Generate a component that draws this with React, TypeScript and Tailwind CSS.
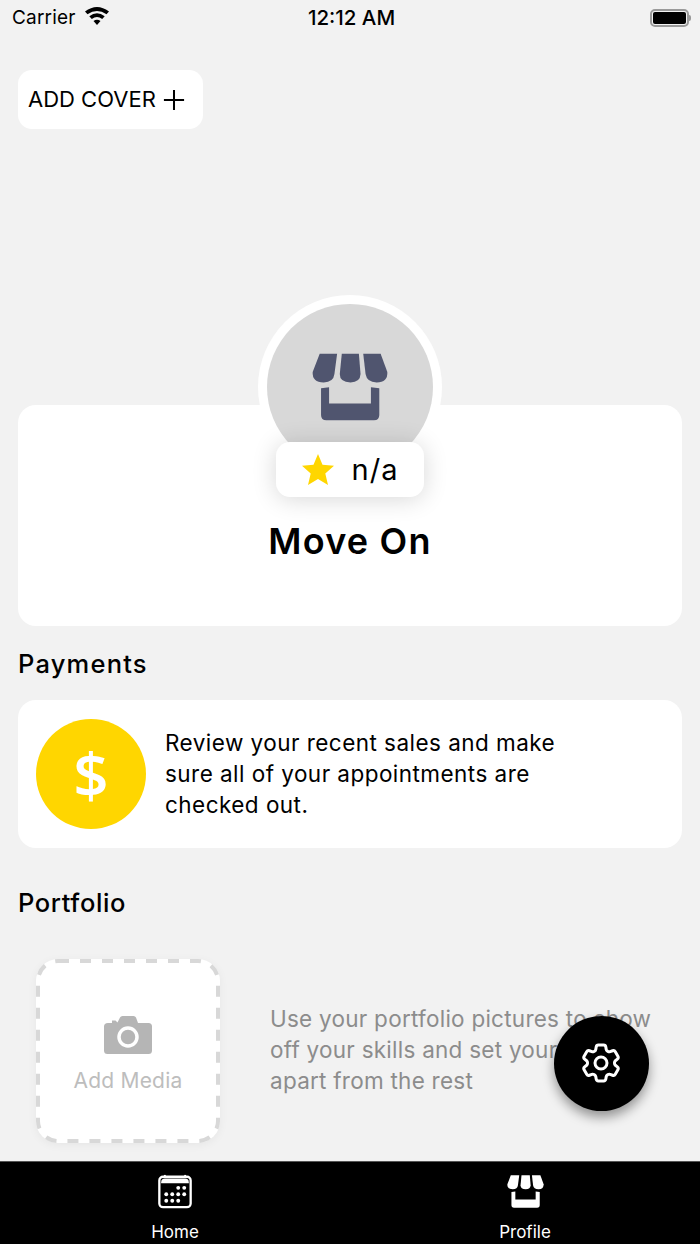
import React from "react";
import { HiOutlineCog6Tooth } from "react-icons/hi2";

const font = "font-['Inter','Liberation_Sans',sans-serif]";

function StoreIcon({ className, fill }: { className: string; fill: string }) {
    return (
        <svg viewBox="214 205 227 203" className={className} fill={fill}>
            <path d="M237 207H289L281 268Q278 293 249 293Q214 293 216 262Z" />
            <path d="M303 207H354L359 268Q358 293 329 293Q297 293 297 268Z" />
            <path d="M367 207H419L439 262Q441 293 407 293Q378 293 374 268Z" />
            <path d="M241 310L265 307V356H390V307L415 310V390Q415 406 399 406H257Q241 406 241 390Z" />
        </svg>
    );
}

function CalendarIcon() {
    const dots = [
        [22.5, 15], [29, 15],
        [9.5, 22], [16, 22], [22.5, 22], [29, 22],
        [9.5, 29], [16, 29], [22.5, 29],
    ];
    return (
        <svg viewBox="0 0 38 38" className="w-[38px] h-[38px]" fill="white">
            <rect x="2" y="3" width="34" height="33" rx="4" fill="none" stroke="white" strokeWidth="2.500" />
            <path d="M4 9Q4 5 8 5H30Q34 5 34 9V10H4Z" />
            <rect x="7" y="1" width="2" height="3" />
            <rect x="29" y="1" width="2" height="3" />
            {dots.map(([x, y], i) => <circle key={i} cx={x} cy={y} r="2.100" />)}
        </svg>
    );
}

function CameraIcon() {
    return (
        <svg viewBox="0 0 48 38" className="w-12 h-[38px]">
            <path
                fill="#b5b5b5"
                d="M4 7H8V4.500H11.500L13.500 6.500L16 1.500Q16.700 0 18.500 0H29.500Q31.300 0 32 1.500L34 7H44.500Q48 7 48 10.500V34.500Q48 38 44.500 38H3.500Q0 38 0 34.500V10.500Q0 7 4 7Z"
            />
            <circle cx="24" cy="21" r="9" fill="none" stroke="white" strokeWidth="3.500" />
        </svg>
    );
}

function StatusBar() {
    return (
        <div className="h-[36px] flex items-center justify-between pl-3 pr-[9px] text-black">
            <div className="flex items-center gap-[8px] w-[120px] text-[19px] tracking-[0.2px]">
                <span>Carrier</span>
                <svg viewBox="0 0 26 20" className="w-[26px] h-5 -mt-1" fill="black">
                    <path d="M13 19L9.500 15Q13 12.300 16.500 15Z" />
                    <path d="M7.800 13L5.300 10.300Q13 4.300 20.700 10.300L18.200 13Q13 9.200 7.800 13Z" />
                    <path d="M3.500 8.300L1 5.500Q13 -3.500 25 5.500L22.500 8.300Q13 1.500 3.500 8.300Z" />
                </svg>
            </div>
            <span className="text-[20.5px] font-medium">12:12 AM</span>
            <div className="w-[120px] flex justify-end items-center">
                <div className="w-[39px] h-[18px] rounded-[5px] border-2 border-[#9a9a9a] p-[1px]">
                    <div className="w-full h-full rounded-[2px] bg-black" />
                </div>
                <div className="w-[2px] h-[6px] bg-[#9a9a9a] rounded-r-sm" />
            </div>
        </div>
    );
}

export default function App() {
    return (
        <div className={`${font} relative w-[700px] h-[1244px] overflow-hidden bg-[#f2f2f2] flex flex-col`}>
            <StatusBar />

            <main className="flex-1 px-[18px]">
                <button className="mt-[34px] w-[185px] h-[59px] bg-white rounded-[14px] flex items-center pl-[10px] gap-[7px] text-[22px] text-black">
                    ADD COVER
                    <svg viewBox="0 0 24 24" className="w-[22px] h-[22px]" stroke="black" strokeWidth="2.200">
                        <path d="M12 1V23M1 12H23" />
                    </svg>
                </button>

                {/* Avatar + rating overlap the card */}
                <div className="mt-[166px] flex flex-col items-center relative z-10 h-[202px]">
                    <div className="w-[184px] h-[184px] rounded-full bg-white p-[9px] shrink-0">
                        <div className="w-full h-full rounded-full bg-[#d8d8d8] flex justify-center pt-[49px]">
                            <StoreIcon className="w-[76px] h-[68px]" fill="#50556f" />
                        </div>
                    </div>
                    <div className="-mt-[37px] w-[148px] h-[55px] shrink-0 bg-white rounded-[14px] flex items-center justify-center gap-[18px] shadow-[0_2px_24px_rgba(0,0,0,0.16)]">
                        <svg viewBox="0 0 32 31" className="w-8 h-[31px]" fill="#ffd600">
                            <path d="M16 0L20.500 10.800L32 11.800L23.300 19.500L26 31L16 24.900L6 31L8.700 19.500L0 11.800L11.500 10.800Z" />
                        </svg>
                        <span className="text-[29px] text-black tracking-[1px]">n/a</span>
                    </div>
                </div>

                <div className="-mt-[92px] h-[221px] bg-white rounded-[18px] flex justify-center pt-[111px]">
                    <h1 className="text-[36px] leading-[50px] font-semibold text-black tracking-[1.2px]">Move On</h1>
                </div>

                <h2 className="mt-[20px] text-[25.5px] leading-[36px] font-medium text-black tracking-[1.2px]">Payments</h2>

                <div className="mt-[18px] h-[148px] bg-white rounded-[18px] flex items-center pl-[18px] gap-[19px]">
                    <div className="w-[110px] h-[110px] rounded-full bg-[#ffd600] flex items-center justify-center shrink-0">
                        <span className="text-[62px] leading-none font-semibold text-white font-['Open_Sans',sans-serif]">$</span>
                    </div>
                    <p className="w-[410px] -mt-[2px] text-[22.5px] leading-[31px] tracking-[0.46px] text-black">
                        Review your recent sales and make sure all of your appointments are checked out.
                    </p>
                </div>

                <h2 className="mt-[37px] text-[25.5px] leading-[36px] font-medium text-black tracking-[0.6px]">Portfolio</h2>

                <div className="mt-[38px] flex items-center pl-[18px] gap-[50px]">
                    <div className="relative w-[184px] h-[184px] bg-white rounded-[22px] flex flex-col items-center shrink-0 pt-[57px] shadow-[0_2px_10px_rgba(0,0,0,0.05)]">
                        <svg className="absolute inset-0 w-full h-full" viewBox="0 0 184 184" fill="none">
                            <rect x="2" y="2" width="180" height="180" rx="20" stroke="#d8d8d8" strokeWidth="4" strokeDasharray="11 11" />
                        </svg>
                        <CameraIcon />
                        <span className="mt-[12px] text-[21px] leading-[30px] tracking-[0.2px] text-[#bdbdbd]">Add Media</span>
                    </div>
                    <p className="w-[385px] -mt-[4px] text-[22.5px] leading-[31px] tracking-[0.25px] text-[#8c8c8c] shrink-0">
                        Use your portfolio pictures to show off your skills and set yourself apart from the rest
                    </p>
                </div>
            </main>

            {/* Floating settings button */}
            <button className="absolute left-[554px] top-[1016px] w-[95px] h-[95px] rounded-full bg-black flex items-center justify-center shadow-[0_6px_12px_rgba(0,0,0,0.4)]">
                <HiOutlineCog6Tooth className="w-[48px] h-[48px] -ml-[2px] -mt-[2px] text-white" />
            </button>

            <nav className="h-[83px] bg-black border-t border-[#555] flex text-white text-[17px]">
                <div className="w-1/2 flex flex-col items-center pt-[12px]">
                    <CalendarIcon />
                    <span className="mt-[11px] leading-[24px]">Home</span>
                </div>
                <div className="w-1/2 flex flex-col items-center pt-[13px]">
                    <StoreIcon className="w-[39px] h-[36px]" fill="white" />
                    <span className="mt-[12px] leading-[24px]">Profile</span>
                </div>
            </nav>
        </div>
    );
}
